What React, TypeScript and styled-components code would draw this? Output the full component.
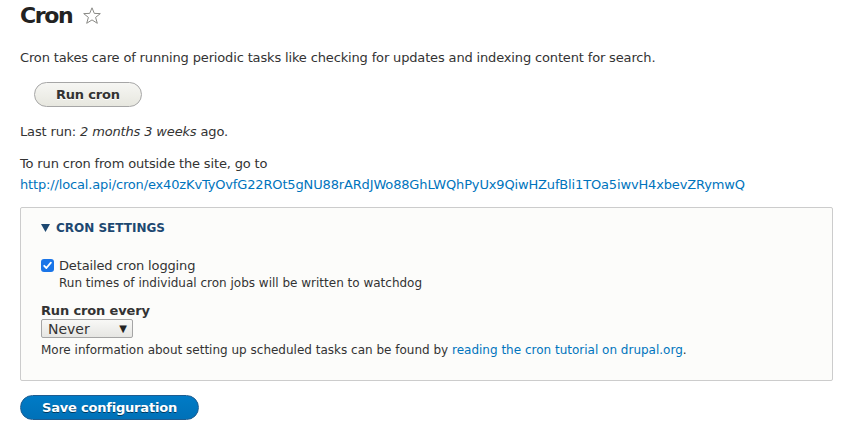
import styled, { createGlobalStyle } from "styled-components";

const GlobalStyle = createGlobalStyle`
  body {
    margin: 0;
    background: #ffffff;
    font-family: "DejaVu Sans", Verdana, sans-serif;
    font-size: 13px;
    color: #333333;
  }
`;

const Page = styled.div`
  padding: 0 15px 0 20px;
  letter-spacing: -0.15px;
`;

const TitleRow = styled.div`
  display: flex;
  align-items: center;
  gap: 10px;
  height: 32px;
`;

const Title = styled.h1`
  margin: 0;
  font-size: 22px;
  font-weight: bold;
  letter-spacing: -1.4px;
  color: #222222;
  line-height: 32px;
`;

const Text = styled.p<{ $top?: number }>`
  margin: ${(p) => p.$top ?? 0}px 0 0;
  line-height: 21px;
`;

const Link = styled.a`
  color: #0074bd;
  text-decoration: none;
`;

const PillButton = styled.button<{ $primary?: boolean }>`
  display: inline-flex;
  align-items: center;
  justify-content: center;
  height: 25px;
  padding: 0 21px;
  border-radius: 20px;
  font-family: "DejaVu Sans", Verdana, sans-serif;
  font-size: 13px;
  font-weight: bold;
  letter-spacing: -0.2px;
  cursor: pointer;
  border: 1px solid ${(p) => (p.$primary ? "#1e5c90" : "#a6a6a6")};
  color: ${(p) => (p.$primary ? "#ffffff" : "#333333")};
  background: ${(p) =>
    p.$primary
      ? "linear-gradient(#007bc6, #0071b8)"
      : "linear-gradient(#f6f6f3, #e7e7df)"};
  text-shadow: ${(p) => (p.$primary ? "0 1px rgba(0,0,0,0.5)" : "0 1px #ffffff")};
`;

const RunRow = styled.div`
  padding: 14px 0 0 14px;
`;

const Fieldset = styled.fieldset`
  margin: 12px 0 0;
  padding: 0 20px 22px;
  border: 1px solid #cccccc;
  border-radius: 2px;
  background: #fcfcfa;
  min-width: 0;
`;

const Legend = styled.div`
  display: flex;
  align-items: center;
  gap: 6px;
  padding: 13px 0 0;
  font-size: 12px;
  font-weight: bold;
  text-transform: uppercase;
  letter-spacing: 0;
  color: #1d4871;
`;

const Item = styled.div<{ $top: number }>`
  margin-top: ${(p) => p.$top}px;
`;

const CheckRow = styled.label`
  display: flex;
  align-items: center;
  gap: 5px;
  line-height: 19px;
`;

const CheckBox = styled.span`
  display: inline-flex;
  align-items: center;
  justify-content: center;
  width: 13px;
  height: 13px;
  border-radius: 3px;
  background: #1a75e8;
`;

const Description = styled.div<{ $indent?: number }>`
  font-size: 12px;
  line-height: 16px;
  letter-spacing: 0;
  color: #333333;
  padding-left: ${(p) => p.$indent ?? 0}px;
`;

const FieldLabel = styled.div`
  font-weight: bold;
  line-height: 16px;
`;

const SelectBox = styled.div`
  display: flex;
  align-items: center;
  justify-content: space-between;
  width: 92px;
  height: 19px;
  box-sizing: border-box;
  padding: 0 5px 0 6px;
  margin: 0 0 4px;
  border: 1px solid #a5a5a5;
  border-radius: 2px;
  background: linear-gradient(#f8f8f6, #e6e6e3);
  font-size: 14px;
  letter-spacing: 0;
  color: #333;
`;

const Arrow = styled.span`
  font-size: 10px;
  color: #222;
`;

const Actions = styled.div`
  padding: 14px 0 0 0;
`;

function Star() {
  return (
    <svg width="20" height="20" viewBox="0 0 20 20">
      <path
        d="M10 1.8 L12.3 7.4 L18.3 7.6 L13.6 11.4 L15.3 17.3 L10 13.9 L4.7 17.3 L6.4 11.4 L1.7 7.6 L7.7 7.4 Z"
        fill="none"
        stroke="#8a8a86"
        strokeWidth="1"
        strokeLinejoin="round"
      />
    </svg>
  );
}

function Check() {
  return (
    <svg width="11" height="11" viewBox="0 0 11 11">
      <path
        d="M2.2 5.8 L4.4 8 L8.9 2.6"
        fill="none"
        stroke="#ffffff"
        strokeWidth="1.8"
        strokeLinecap="round"
        strokeLinejoin="round"
      />
    </svg>
  );
}

export default function App() {
  const url =
    "http://local.api/cron/ex40zKvTyOvfG22ROt5gNU88rARdJWo88GhLWQhPyUx9QiwHZufBli1TOa5iwvH4xbevZRymwQ";
  return (
    <Page>
      <GlobalStyle />
      <TitleRow>
        <Title>Cron</Title>
        <Star />
      </TitleRow>
      <Text $top={15}>
        Cron takes care of running periodic tasks like checking for updates and
        indexing content for search.
      </Text>
      <RunRow>
        <PillButton>Run cron</PillButton>
      </RunRow>
      <Text $top={14}>
        Last run: <em>2 months 3 weeks</em> ago.
      </Text>
      <Text $top={11}>
        To run cron from outside the site, go to
        <br />
        <Link href="#">{url}</Link>
      </Text>
      <Fieldset>
        <Legend>
          <svg width="9" height="8" viewBox="0 0 9 8">
            <path d="M0 0 L9 0 L4.5 8 Z" fill="#1d4871" />
          </svg>
          Cron settings
        </Legend>
        <Item $top={21}>
          <CheckRow>
            <CheckBox>
              <Check />
            </CheckBox>
            Detailed cron logging
          </CheckRow>
          <Description $indent={18}>
            Run times of individual cron jobs will be written to watchdog
          </Description>
        </Item>
        <Item $top={12}>
          <FieldLabel>Run cron every</FieldLabel>
          <SelectBox>
            Never
            <Arrow>▼</Arrow>
          </SelectBox>
          <Description>
            More information about setting up scheduled tasks can be found by{" "}
            <Link href="#">reading the cron tutorial on drupal.org</Link>.
          </Description>
        </Item>
      </Fieldset>
      <Actions>
        <PillButton $primary>Save configuration</PillButton>
      </Actions>
    </Page>
  );
}
